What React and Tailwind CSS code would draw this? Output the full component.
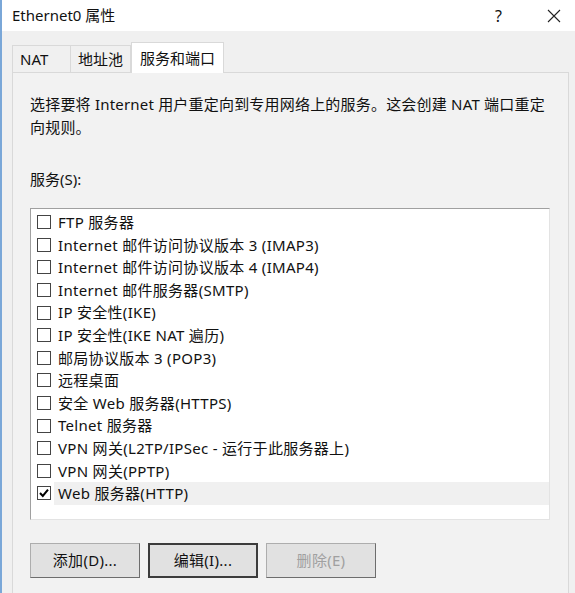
import React from 'react'

const services = [
  { label: 'FTP 服务器', checked: false },
  { label: 'Internet 邮件访问协议版本 3 (IMAP3)', checked: false },
  { label: 'Internet 邮件访问协议版本 4 (IMAP4)', checked: false },
  { label: 'Internet 邮件服务器(SMTP)', checked: false },
  { label: 'IP 安全性(IKE)', checked: false },
  { label: 'IP 安全性(IKE NAT 遍历)', checked: false },
  { label: '邮局协议版本 3 (POP3)', checked: false },
  { label: '远程桌面', checked: false },
  { label: '安全 Web 服务器(HTTPS)', checked: false },
  { label: 'Telnet 服务器', checked: false },
  { label: 'VPN 网关(L2TP/IPSec - 运行于此服务器上)', checked: false },
  { label: 'VPN 网关(PPTP)', checked: false },
  { label: 'Web 服务器(HTTP)', checked: true, selected: true },
]

const font = { fontFamily: '"Noto Sans", "Noto Sans CJK SC", sans-serif' }

const CheckBox = ({ checked }) => (
  <span className="flex h-[14px] w-[14px] shrink-0 items-center justify-center border border-[#444] bg-white">
    {checked && (
      <svg width="12" height="12" viewBox="0 0 12 12">
        <path d="M2 6 L4.8 9 L10 2.6" fill="none" stroke="#000" strokeWidth="2" />
      </svg>
    )}
  </span>
)

const Button = ({ children, primary, disabled }) => (
  <button
    className={
      'h-[35px] w-[110px] bg-[#e1e1e1] text-[15px] tracking-[0.3px] ' +
      (primary
        ? 'border-2 border-[#3c3c3c] text-[#111]'
        : 'border border-[#adadad] border-b-[#6d6d6d] border-r-[#6d6d6d] ' + (disabled ? 'text-[#a0a0a0]' : 'text-[#111]'))
    }
  >
    {children}
  </button>
)

export default function App() {
  return (
    <div className="h-[593px] w-[575px] overflow-hidden border-l-2 border-[#7aa7d8] bg-[#f0f0f0] text-[#111]" style={font}>
      <div className="flex h-[31px] items-center bg-white pl-[10px] pr-[14px] text-[15px]">
        <span>Ethernet0 属性</span>
        <span className="ml-auto mr-[45px] text-[16px]">?</span>
        <svg width="14" height="14" viewBox="0 0 14 14">
          <path d="M1 1 L13 13 M13 1 L1 13" stroke="#222" strokeWidth="1.1" />
        </svg>
      </div>

      <div className="pl-[10px] pr-[6px] pt-[11px]">
        <div className="flex h-[30px] items-end text-[15px]">
          <div className="flex h-[27px] w-[59px] items-center border border-b-0 border-[#d9d9d9] pl-[7px]">NAT</div>
          <div className="flex h-[27px] w-[60px] items-center justify-center border border-b-0 border-l-0 border-[#d9d9d9]">地址池</div>
          <div className="relative z-10 -mb-px flex h-[31px] w-[93px] items-center justify-center border border-b-0 border-[#d9d9d9] bg-white">服务和端口</div>
        </div>

        <div className="h-[540px] border border-[#d9d9d9] bg-[#f2f2f2] pl-[17px] pt-[20px]">
          <p className="text-[15px] leading-[23px] tracking-[0.2px]">
            选择要将 Internet 用户重定向到专用网络上的服务。这会创建 NAT 端口重定
            <br />
            向规则。
          </p>
          <p className="mt-[29px] text-[15px] leading-[23px]">服务(S):</p>

          <div className="mt-[17px] h-[312px] w-[520px] border border-[#a0a0a0] border-b-[#e3e3e3] border-r-[#e3e3e3] bg-white pt-[2px]">
            {services.map((s) => (
              <div key={s.label} className="flex h-[22.6px] items-center pl-[6px]">
                <CheckBox checked={s.checked} />
                <span
                  className={
                    'ml-[3px] flex h-full flex-1 items-center pl-[4px] text-[15px] tracking-[0.3px] ' +
                    (s.selected ? 'bg-[#f0f0f0]' : '')
                  }
                >
                  {s.label}
                </span>
              </div>
            ))}
          </div>

          <div className="mt-[23px] flex gap-[8px]">
            <Button>添加(D)...</Button>
            <Button primary>编辑(I)...</Button>
            <Button disabled>删除(E)</Button>
          </div>
        </div>
      </div>
    </div>
  )
}
